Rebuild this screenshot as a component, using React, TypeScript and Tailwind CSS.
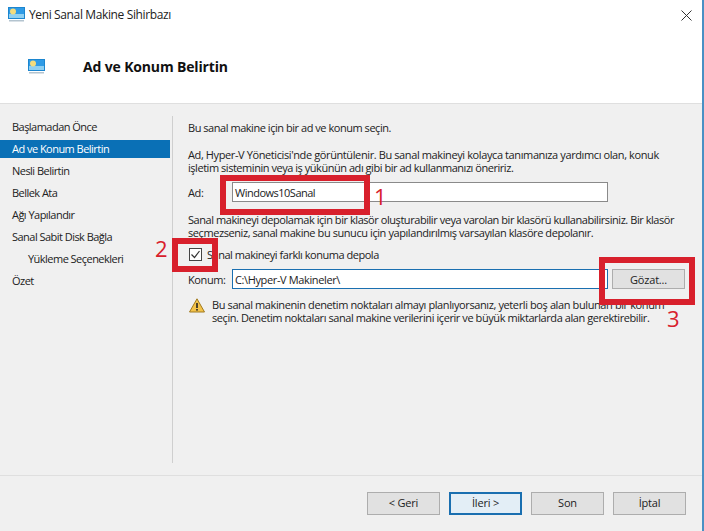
import React from "react";

const font = { fontFamily: '"Open Sans", "Noto Sans", sans-serif' };

const steps = [
  { label: "Başlamadan Önce" },
  { label: "Ad ve Konum Belirtin", active: true },
  { label: "Nesli Belirtin" },
  { label: "Bellek Ata" },
  { label: "Ağı Yapılandır" },
  { label: "Sanal Sabit Disk Bağla" },
  { label: "Yükleme Seçenekleri", sub: true },
  { label: "Özet" },
];

const MonitorIcon = () => (
  <svg width="17" height="16" viewBox="0 0 17 16">
    <rect x="0.5" y="0.5" width="16" height="11" fill="#2f9be6" stroke="#1c86cf" />
    <rect x="1" y="7" width="15" height="4" fill="#8fd0f2" />
    <circle cx="5" cy="4.5" r="3" fill="#f4dc7c" />
    <rect x="1" y="13" width="15" height="1.5" fill="#b4c4cf" />
  </svg>
);

const Btn = ({ children, primary }: { children: React.ReactNode; primary?: boolean }) => (
  <button
    className={
      primary
        ? "h-[23px] w-[73px] border-2 border-[#1a6fb0] bg-[#e3eef6] text-[11px] tracking-[-0.2px] text-[#222]"
        : "h-[23px] w-[73px] border border-[#adadad] bg-[#e1e1e1] text-[11px] tracking-[-0.2px] text-[#222]"
    }
  >
    {children}
  </button>
);

export default function App() {
  return (
    <div style={font} className="relative flex h-[531px] w-[704px] overflow-hidden bg-white text-[11px] text-[#222]">
      <div className="flex w-[702px] shrink-0 flex-col">
        {/* Title bar */}
        <div className="flex h-[30px] items-center pl-2">
          <MonitorIcon />
          <span className="ml-[4px] text-[12px] tracking-[-0.37px] text-[#222]">Yeni Sanal Makine Sihirbazı</span>
          <svg className="ml-auto mr-[10px]" width="11" height="11" viewBox="0 0 11 11">
            <path d="M0.5 0.5l10 10M10.5 0.5l-10 10" stroke="#333" strokeWidth="1" />
          </svg>
        </div>

        {/* Header */}
        <div className="flex h-[74px] items-center border-b border-[#dfdfdf] pl-7">
          <MonitorIcon />
          <h1 className="ml-[38px] text-[14px] font-bold tracking-[-0.15px] text-[#111]">Ad ve Konum Belirtin</h1>
        </div>

        {/* Body */}
        <div className="flex min-h-0 flex-1 flex-col bg-[#f0f0f0]">
          <div className="flex min-h-0 flex-1 pt-[12px]">
            <div className="w-[170px] shrink-0 tracking-[-0.53px]">
              {steps.map((s) => (
                <div
                  key={s.label}
                  className={
                    s.active
                      ? "my-[2px] flex h-[18px] items-center bg-[#0a70b6] pl-3 text-white"
                      : s.sub
                        ? "flex h-[22px] items-center pl-7"
                        : "flex h-[22px] items-center pl-3"
                  }
                >
                  {s.label}
                </div>
              ))}
            </div>
            <div className="mb-[12px] ml-[2px] w-px bg-[#cfcfcf]" />
            <div className="ml-[15px] w-[512px] whitespace-nowrap pt-[5px] leading-[13px]">
              <p className="tracking-[-0.46px]">Bu sanal makine için bir ad ve konum seçin.</p>
              <p className="mt-[14px]">
                <span className="block tracking-[-0.39px]">
                  Ad, Hyper-V Yöneticisi'nde görüntülenir. Bu sanal makineyi kolayca tanımanıza yardımcı olan, konuk
                </span>
                <span className="block tracking-[-0.46px]">
                  işletim sisteminin veya iş yükünün adı gibi bir ad kullanmanızı öneririz.
                </span>
              </p>
              <div className="mt-[8px] flex items-center">
                <span className="w-[44px] tracking-[-0.4px]">Ad:</span>
                <div className="flex h-[20px] w-[376px] items-center border border-[#8a8a8a] bg-white pl-[2px] tracking-[-0.5px]">
                  Windows10Sanal
                </div>
              </div>
              <p className="mt-[11px]">
                <span className="block tracking-[-0.44px]">
                  Sanal makineyi depolamak için bir klasör oluşturabilir veya varolan bir klasörü kullanabilirsiniz. Bir klasör
                </span>
                <span className="block tracking-[-0.42px]">
                  seçmezseniz, sanal makine bu sunucu için yapılandırılmış varsayılan klasöre depolanır.
                </span>
              </p>
              <div className="ml-[1px] mt-[9px] flex items-center">
                <div className="flex h-[13px] w-[13px] items-center justify-center border border-[#444] bg-white">
                  <svg width="11" height="11" viewBox="0 0 11 11">
                    <path d="M1.5 5.5l3 3 5-6.5" fill="none" stroke="#333" strokeWidth="1.2" />
                  </svg>
                </div>
                <span className="ml-[5px] tracking-[-0.47px]">Sanal makineyi farklı konuma depola</span>
              </div>
              <div className="mt-[8px] flex items-center">
                <span className="w-[44px] tracking-[-0.4px]">Konum:</span>
                <div className="flex h-[20px] w-[376px] items-center border border-[#1a6fb0] bg-white pl-[2px] tracking-[-0.37px]">
                  C:\Hyper-V Makineler\
                </div>
                <button className="ml-[4px] h-[20px] w-[73px] border border-[#adadad] bg-[#e1e1e1] tracking-[-0.2px]">
                  Gözat...
                </button>
              </div>
              <div className="ml-[1px] mt-[9px] flex">
                <svg className="mr-[7px] shrink-0" width="16" height="15" viewBox="0 0 16 15">
                  <path d="M8 .8L15.5 14H.5z" fill="#f4c34a" stroke="#a07a20" />
                  <rect x="7.2" y="5" width="1.6" height="5" fill="#222" />
                  <rect x="7.2" y="11" width="1.6" height="1.6" fill="#222" />
                </svg>
                <p>
                  <span className="block tracking-[-0.39px]">
                    Bu sanal makinenin denetim noktaları almayı planlıyorsanız, yeterli boş alan bulunan bir konum
                  </span>
                  <span className="block tracking-[-0.42px]">
                    seçin. Denetim noktaları sanal makine verilerini içerir ve büyük miktarlarda alan gerektirebilir.
                  </span>
                </p>
              </div>
            </div>
          </div>

          {/* Footer */}
          <div className="flex h-[56px] shrink-0 items-center justify-end gap-[9px] border-t border-[#dfdfdf] pb-[1px] pr-[16px]">
            <Btn>&lt; Geri</Btn>
            <Btn primary>İleri &gt;</Btn>
            <Btn>Son</Btn>
            <Btn>İptal</Btn>
          </div>
        </div>
      </div>
      <div className="flex-1 border-l-2 border-[#4a90c4] bg-white" />

      {/* Annotations drawn over the screenshot */}
      <div className="absolute left-[220px] top-[175px] h-[40px] w-[150px] border-[6px] border-[#d8202c]" />
      <div className="absolute left-[172px] top-[238px] h-[34px] w-[46px] border-[6px] border-[#d8202c]" />
      <div className="absolute left-[599px] top-[257px] h-[48px] w-[96px] border-[6px] border-[#d8202c]" />
      <span className="absolute left-[374px] top-[185px] text-[22px] leading-[22px] text-[#d8202c]">1</span>
      <span className="absolute left-[155px] top-[237px] text-[22px] leading-[22px] text-[#d8202c]">2</span>
      <span className="absolute left-[667px] top-[307px] text-[22px] leading-[22px] text-[#d8202c]">3</span>
    </div>
  );
}
